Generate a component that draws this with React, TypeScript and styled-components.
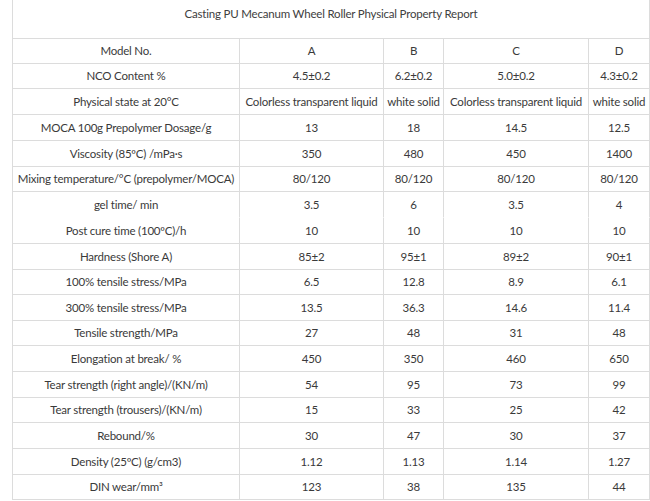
import React from "react";
import styled, { createGlobalStyle } from "styled-components";

const Global = createGlobalStyle`
  html, body { margin: 0; padding: 0; background: #ffffff; }
  body { font-family: Lato, "Open Sans", sans-serif; color: #3a3a3a; }
`;

const rows: [string, string, string, string, string][] = [
  ["Model No.", "A", "B", "C", "D"],
  ["NCO Content %", "4.5±0.2", "6.2±0.2", "5.0±0.2", "4.3±0.2"],
  ["Physical state at 20°C", "Colorless transparent liquid", "white solid", "Colorless transparent liquid", "white solid"],
  ["MOCA 100g Prepolymer Dosage/g", "13", "18", "14.5", "12.5"],
  ["Viscosity (85ºC) /mPa·s", "350", "480", "450", "1400"],
  ["Mixing temperature/°C (prepolymer/MOCA)", "80/120", "80/120", "80/120", "80/120"],
  ["gel time/ min", "3.5", "6", "3.5", "4"],
  ["Post cure time (100ºC)/h", "10", "10", "10", "10"],
  ["Hardness (Shore A)", "85±2", "95±1", "89±2", "90±1"],
  ["100% tensile stress/MPa", "6.5", "12.8", "8.9", "6.1"],
  ["300% tensile stress/MPa", "13.5", "36.3", "14.6", "11.4"],
  ["Tensile strength/MPa", "27", "48", "31", "48"],
  ["Elongation at break/ %", "450", "350", "460", "650"],
  ["Tear strength (right angle)/(KN/m)", "54", "95", "73", "99"],
  ["Tear strength (trousers)/(KN/m)", "15", "33", "25", "42"],
  ["Rebound/%", "30", "47", "30", "37"],
  ["Density (25ºC) (g/cm3)", "1.12", "1.13", "1.14", "1.27"],
  ["DIN wear/mm³", "123", "38", "135", "44"],
];

// y positions of the horizontal rules in the report
const rules = [-1, 38, 63, 88, 114, 140, 166, 191, 217, 243, 269, 294, 320, 345, 371, 397, 422, 448, 474, 499];
const rowTemplate = rules
  .slice(1)
  .map((y, i) => `${y - rules[i]}px`)
  .join(" ");

const Page = styled.div`
  width: 650px;
  height: 501px;
  padding-left: 12px;
  box-sizing: border-box;
  overflow: hidden;
`;

const Sheet = styled.div`
  display: grid;
  grid-template-columns: 227px 144px 60px 145px 61px;
  grid-template-rows: ${rowTemplate};
  border-left: 1px solid #dcdcdc;
  font-size: 11.5px;
  letter-spacing: -0.2px;
`;

const Title = styled.div`
  grid-column: 1 / -1;
  box-sizing: border-box;
  padding-top: 7px;
  text-align: center;
  line-height: 14px;
  border-right: 1px solid #dcdcdc;
  border-bottom: 1px solid #dcdcdc;
  color: #404040;
`;

const Cell = styled.div<{ $open?: boolean }>`
  box-sizing: border-box;
  display: flex;
  align-items: center;
  justify-content: center;
  white-space: nowrap;
  border-right: 1px solid #dcdcdc;
  border-bottom: 1px solid ${(p) => (p.$open ? "#ffffff" : "#dcdcdc")};
  padding-bottom: 1px;
  color: #3a3a3a;
`;

export default function App() {
  return (
    <>
      <Global />
      <Page>
        <Sheet>
          <Title>Casting PU Mecanum Wheel Roller Physical Property Report</Title>
          {rows.map((r, i) =>
            r.map((c, j) => (
              <Cell key={`${i}-${j}`} $open={i === 6}>
                {c}
              </Cell>
            ))
          )}
        </Sheet>
      </Page>
    </>
  );
}
